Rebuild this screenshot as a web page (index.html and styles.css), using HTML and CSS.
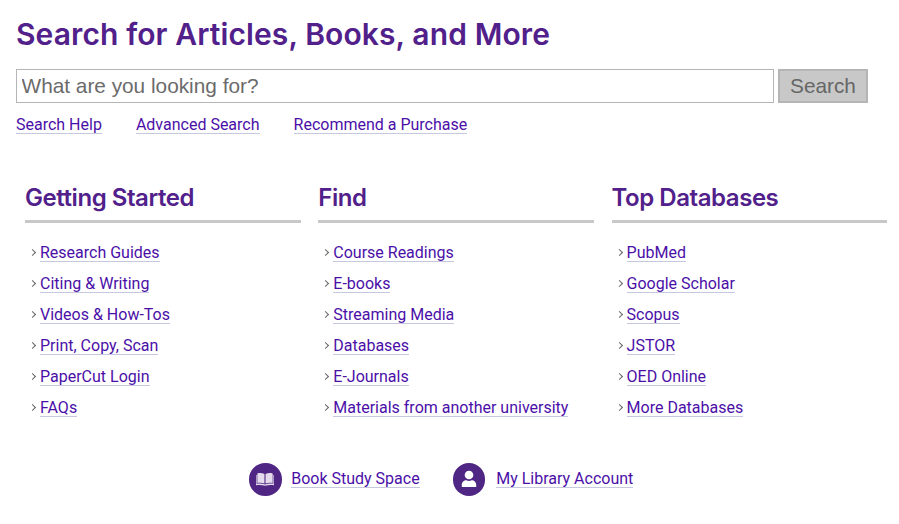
FILE: index.html
```html
<!DOCTYPE html>
<html lang="en">
<head>
<meta charset="utf-8">
<title>Search</title>
<link rel="stylesheet" href="styles.css">
</head>
<body>
<main class="page">
  <h1 class="title">Search for Articles, Books, and More</h1>
  <form class="search">
    <input class="search-input" type="text" placeholder="What are you looking for?">
    <button class="search-btn" type="button">Search</button>
  </form>
  <nav class="search-links">
    <a href="#">Search Help</a>
    <a href="#">Advanced Search</a>
    <a href="#">Recommend a Purchase</a>
  </nav>
  <section class="columns">
    <div class="col">
      <h2 class="col-title">Getting Started</h2>
      <ul class="col-list">
        <li><a href="#">Research Guides</a></li>
        <li><a href="#">Citing &amp; Writing</a></li>
        <li><a href="#">Videos &amp; How-Tos</a></li>
        <li><a href="#">Print, Copy, Scan</a></li>
        <li><a href="#">PaperCut Login</a></li>
        <li><a href="#">FAQs</a></li>
      </ul>
    </div>
    <div class="col">
      <h2 class="col-title">Find</h2>
      <ul class="col-list">
        <li><a href="#">Course Readings</a></li>
        <li><a href="#">E-books</a></li>
        <li><a href="#">Streaming Media</a></li>
        <li><a href="#">Databases</a></li>
        <li><a href="#">E-Journals</a></li>
        <li><a href="#">Materials from another university</a></li>
      </ul>
    </div>
    <div class="col">
      <h2 class="col-title">Top Databases</h2>
      <ul class="col-list">
        <li><a href="#">PubMed</a></li>
        <li><a href="#">Google Scholar</a></li>
        <li><a href="#">Scopus</a></li>
        <li><a href="#">JSTOR</a></li>
        <li><a href="#">OED Online</a></li>
        <li><a href="#">More Databases</a></li>
      </ul>
    </div>
  </section>
  <div class="actions">
    <div class="action">
      <span class="badge">
        <svg class="badge-icon" viewBox="0 0 20 16" aria-hidden="true"><path fill="#e4dcec" d="M1.500 1.800C4 1 7 1.100 9.400 2.400V13C7 12 4 11.900 1.500 12.500zM10.600 2.400C13 1.100 16 1 18.500 1.800V12.500C16 11.900 13 12 10.600 13z"/><path fill="#e4dcec" d="M0 3.500h.7V13.400C3.500 12.800 7 12.900 10 14c3-1.100 6.500-1.200 9.300-.6V3.500h.7V15c-3-.7-6.800-.6-10 .5C6.800 14.400 3 14.300 0 15z"/></svg>
      </span>
      <a href="#">Book Study Space</a>
    </div>
    <div class="action action-account">
      <span class="badge">
        <svg class="badge-icon" viewBox="0 0 20 20" aria-hidden="true"><circle cx="10" cy="5.500" r="4.800" fill="#fff"/><path fill="#fff" d="M2 19v-2.500C2 13.500 4.500 11.500 7 11.500c1 .4 2 .6 3 .6s2-.2 3-.6c2.500 0 5 2 5 5V19z"/></svg>
      </span>
      <a href="#">My Library Account</a>
    </div>
  </div>
</main>
</body>
</html>
```
FILE: styles.css
```css
* { box-sizing: border-box; }
html, body { margin: 0; padding: 0; background: #fff; }
body { font-family: Roboto, "Liberation Sans", sans-serif; font-size: 16px; color: #4f2683; }
a { color: #4b0fa8; text-decoration: none; border-bottom: 1px solid #c5c8de; line-height: 17px; display: inline-block; }
.page { padding: 14px 12px 0 16px; }
.title { margin: 0; font-family: Inter, Roboto, sans-serif; font-size: 30px; line-height: 40px; font-weight: 600; letter-spacing: .11px; color: #51208a; }
.search { display: flex; gap: 4px; margin-top: 15px; width: 852px; }
.search-input { flex: 1; height: 34px; border: 1px solid #b5b5b5; padding: 0 4.500px; font-family: "Liberation Sans", sans-serif; font-size: 20.8px; color: #666; }
.search-input::placeholder { color: #6b6b6b; opacity: 1; }
.search-btn { width: 90px; height: 34px; background: #c8c8c8; border: 2px solid #b5b5b5; font-family: "Liberation Sans", sans-serif; font-size: 20.8px; color: #666; padding: 0; }
.search-links { display: flex; gap: 34px; margin-top: 13px; }
.columns { display: grid; grid-template-columns: repeat(3, 275.6px); gap: 17.7px; margin-top: 45px; padding-left: 9px; }
.col-title { margin: 0; height: 44px; padding-top: 4px; border-bottom: 3px solid #c8c8c8; font-family: Inter, Roboto, sans-serif; font-size: 24px; line-height: 30px; font-weight: 600; letter-spacing: -.45px; color: #51208a; }
.col-list { list-style: none; margin: 20px 0 0; padding: 0 0 0 15px; display: flex; flex-direction: column; gap: 13px; }
.col-list li { position: relative; height: 18px; }
.col-list li::before { content: ""; position: absolute; left: -10px; top: 7px; width: 4px; height: 4px; border-top: 1px solid #666; border-right: 1px solid #666; transform: rotate(45deg); }
.actions { display: flex; justify-content: center; gap: 33px; margin-top: 47px; padding-right: 20.500px; }
.action { display: flex; align-items: center; gap: 9.500px; }
.action-account { gap: 11px; }
.badge { width: 32.500px; height: 32.500px; border-radius: 50%; background: #4f2683; display: flex; align-items: center; justify-content: center; }
.badge-icon { width: 18px; height: 18px; }
```
